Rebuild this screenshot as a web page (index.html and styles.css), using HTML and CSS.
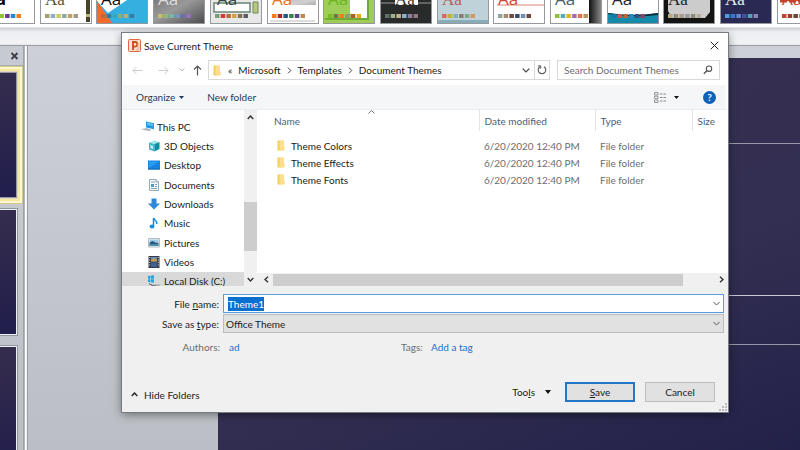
FILE: index.html
```html
<!DOCTYPE html>
<html lang="en">
<head>
<meta charset="utf-8">
<meta name="viewport" content="width=device-width, initial-scale=1">
<title>Save Current Theme</title>
<link rel="stylesheet" href="styles.css">
</head>
<body>
<div class="app">
  <header class="ribbon">
    <div class="gallery" id="gallery"></div>
  </header>
  <div class="workspace">
    <aside class="slides">
      <div class="slides-head"><button class="slides-close" aria-label="Close pane"><svg width="9" height="8" viewBox="0 0 9 8"><path d="M1.5 1l6 6M7.5 1l-6 6" stroke="#3a3d42" stroke-width="1.8"/></svg></button></div>
      <div class="thumb selected"></div>
      <div class="thumb"></div>
      <div class="thumb"></div>
    </aside>
    <div class="divider"></div>
    <main class="canvas"><div class="slide"><i class="guide first"></i><i class="guide second"></i><i class="guide third"></i></div></main>
  </div>
</div>

<section class="dialog" role="dialog" aria-labelledby="dialog-title">
  <div class="titlebar">
    <svg width="13" height="13" viewBox="0 0 13 13"><rect x=".5" y=".5" width="12" height="12" rx="1" fill="#fbd9c8" stroke="#dd6a45"/><path d="M2 2h9v9H2z" fill="#f6e6dc"/><path d="M5 11V3h2a2.2 2.2 0 0 1 0 4.600H5" fill="none" stroke="#d04a1d" stroke-width="1.900"/><path d="M10 4v7H8" fill="none" stroke="#efa283"/></svg>
    <h1 id="dialog-title">Save Current Theme</h1>
    <button class="close" aria-label="Close"><svg width="9" height="9" viewBox="0 0 9 9"><path d="M.7.7l7.600 7.600M8.300.7L.7 8.300" stroke="#222" stroke-width="1"/></svg></button>
  </div>

  <div class="navbar">
    <div class="arrows">
      <button aria-label="Back"><svg width="11" height="9" viewBox="0 0 11 9"><path d="M10.500 4.500H1M4.500 1L1 4.500 4.500 8" fill="none" stroke="#ccc"/></svg></button>
      <button aria-label="Forward"><svg width="11" height="9" viewBox="0 0 11 9"><path d="M.5 4.500H10M6.500 1L10 4.500 6.500 8" fill="none" stroke="#ccc"/></svg></button>
      <button aria-label="Recent locations"><svg width="6" height="4" viewBox="0 0 6 4"><path d="M.5.5L3 3 5.500.5" fill="none" stroke="#bbb"/></svg></button>
      <button aria-label="Up"><svg width="9" height="11" viewBox="0 0 9 11"><path d="M4.500 10.500V1M1 4.500L4.500 1 8 4.500" fill="none" stroke="#555" stroke-width="1.200"/></svg></button>
    </div>
    <div class="address">
      <svg class="folder" width="8" height="11" viewBox="0 0 8 11"><path d="M.5.5h4v10h-4z" fill="#f2cd64"/><path d="M2.500.500h4.500v6l.7.5v3.500H2.500z" fill="#fbdf8c"/></svg>
      <span class="laquo">«</span>
      <a href="#microsoft">Microsoft</a><svg class="crumb" width="5" height="7" viewBox="0 0 5 7"><path d="M1 .7l2.800 2.800L1 6.300" fill="none" stroke="#444"/></svg>
      <a href="#templates">Templates</a><svg class="crumb" width="5" height="7" viewBox="0 0 5 7"><path d="M1 .7l2.800 2.800L1 6.300" fill="none" stroke="#444"/></svg>
      <a href="#themes">Document Themes</a>
      <button class="history" aria-label="Previous locations"><svg width="8" height="5" viewBox="0 0 8 5"><path d="M.7.7L4 4 7.300.7" fill="none" stroke="#444" stroke-width="1.200"/></svg></button>
      <button class="refresh" aria-label="Refresh"><svg width="10" height="10" viewBox="0 0 10 10"><path d="M3 1.700A3.800 3.800 0 1 0 7 1.700" fill="none" stroke="#555" stroke-width="1.100"/><path d="M.9.9h2.800v2.800" fill="none" stroke="#555"/></svg></button>
    </div>
    <div class="search">
      <input type="search" aria-label="Search Document Themes" placeholder="Search Document Themes">
      <svg width="10" height="10" viewBox="0 0 10 10"><circle cx="6" cy="3.700" r="2.700" fill="none" stroke="#555" stroke-width="1.100"/><path d="M4 5.700L.8 8.800" stroke="#555" stroke-width="1.400"/></svg>
    </div>
  </div>

  <div class="toolbar">
    <button>Organize <svg width="5" height="3" viewBox="0 0 5 3"><path d="M0 0h5L2.500 3z" fill="#1e3a5c"/></svg></button>
    <button>New folder</button>
    <button class="view" aria-label="Change view"><svg width="12" height="11" viewBox="0 0 12 11"><path d="M.5.500h3.500v2.500H.5zM.5 4.200h3.500v2.500H.5zM.5 8h3.500v2.500H.5z" fill="#eee" stroke="#999"/><path d="M6 2h2.500M9.500 2H12M6 5.500h2.500M9.500 5.500H12M6 9h2.500M9.500 9H12" stroke="#888"/></svg></button>
    <button class="view-menu" aria-label="More view options"><svg width="5" height="3" viewBox="0 0 5 3"><path d="M0 0h5L2.500 3z" fill="#111"/></svg></button>
    <button class="help" aria-label="Help">?</button>
  </div>

  <div class="browser">
    <ul class="tree">
      <li class="root"><svg width="13" height="11" viewBox="0 0 13 11"><path d="M4 .5l8 1.700v6L4 6.500z" fill="#2795df"/><path d="M5 1.600l6 1.400v2L5 4z" fill="#64c2f4"/><path d="M4 7l5 1.500-1 1.500L1 9z" fill="#a9b2ba"/><path d="M0 8.500l4-1" stroke="#b8c0c6"/></svg>This PC</li>
      <li><svg width="12" height="12" viewBox="0 0 12 12"><path d="M1 2.500L6 .5l5.500 1.500-5 2z" fill="#9fe8ec"/><path d="M1 2.500l5.500 1.500v7.500L1 9.500z" fill="#35bfcd"/><path d="M6.500 4l5-2v7l-5 2.500z" fill="#128ca3"/><path d="M2.500 5L5 6v3L2.500 8z" fill="#c6f4f4"/></svg>3D Objects</li>
      <li><svg width="12" height="12" viewBox="0 0 12 12"><path d="M0 1.500h12v9H0z" fill="#1684df"/><path d="M1 2.500h10L1 9z" fill="#299cf0"/><path d="M0 9.500h12v1H0z" fill="#1069b4"/></svg>Desktop</li>
      <li><svg width="12" height="12" viewBox="0 0 12 12"><path d="M1.500.5h6.500l2.500 2.500v8.500h-9z" fill="#f5f9fc" stroke="#97aab8"/><path d="M8 .5V3h2.500" fill="none" stroke="#97aab8"/><path d="M3 5h3v3H3z" fill="#4e9cc8"/><path d="M3 3h4M7 5.500h2M7 7.500h2M3 9.500h6" stroke="#78a6c4"/></svg>Documents</li>
      <li><svg width="12" height="12" viewBox="0 0 12 12"><path d="M3.500.5h5v5H12l-6 6-6-6h3.500z" fill="#2e88d9"/></svg>Downloads</li>
      <li><svg width="12" height="12" viewBox="0 0 12 12"><path d="M5.500 9V1c.5 2.200 4 2.500 3.200 6" fill="none" stroke="#168de2" stroke-width="1.500"/><ellipse cx="4" cy="9.500" rx="2.400" ry="1.900" fill="#168de2"/></svg>Music</li>
      <li><svg width="12" height="12" viewBox="0 0 12 12"><path d="M.5 1.500h11v8.500H.5z" fill="#f4f7f8" stroke="#b5bcc1"/><path d="M1.500 2.500h9V5h-9z" fill="#9ccce8"/><path d="M1.500 5.500l3-1.500 3 1.500h3v3h-9z" fill="#28597f"/><path d="M1.500 7h9v2h-9z" fill="#4a8da9"/></svg>Pictures</li>
      <li><svg width="12" height="12" viewBox="0 0 12 12"><path d="M.5 0h11v12H.5z" fill="#3b3b43"/><path d="M3 1h6v4.500H3z" fill="#638ebf"/><path d="M3 6.500h6V11H3z" fill="#3f6199"/><path d="M3 4l3-2 3 2v1.500H3z" fill="#be9c4d"/><path d="M1.700 1v10M10.300 1v10" stroke="#ddd" stroke-dasharray="1 1.500"/></svg>Videos</li>
      <li class="current"><svg width="12" height="12" viewBox="0 0 12 12"><path d="M0 1l2.500-.3v3H0zM3 .7L6 .3v3.400H3zM0 4.200h2.500v3L0 7zM3 4.200h3v3.600l-3-.4z" fill="#22a8df"/><path d="M1 8.500l4 2.500h7V9.500L8 9l-3 .5z" fill="#adb3b5"/><path d="M1 8.500l4 2.500h3" fill="none" stroke="#51585c"/></svg>Local Disk (C:)</li>
    </ul>
    <div class="vscroll">
      <svg width="7" height="5" viewBox="0 0 7 5"><path d="M.7 4l2.800-3 2.800 3" fill="none" stroke="#333" stroke-width="1.400"/></svg>
      <span class="vthumb"></span>
      <svg width="7" height="5" viewBox="0 0 7 5"><path d="M.7 1l2.800 3 2.800-3" fill="none" stroke="#333" stroke-width="1.400"/></svg>
    </div>
    <div class="files">
      <table>
        <colgroup><col class="c-name"><col class="c-date"><col class="c-type"><col></colgroup>
        <thead><tr><th class="sorted">Name<svg width="7" height="4" viewBox="0 0 7 4"><path d="M.5 3.500l3-3 3 3" fill="none" stroke="#777"/></svg></th><th>Date modified</th><th>Type</th><th>Size</th></tr></thead>
        <tbody>
          <tr><td><svg class="folder" width="8" height="11" viewBox="0 0 8 11"><path d="M.5.5h4v10h-4z" fill="#f2cd64"/><path d="M2.500.500h4.500v6l.7.5v3.500H2.500z" fill="#fbdf8c"/></svg>Theme Colors</td><td>6/20/2020 12:40 PM</td><td>File folder</td><td></td></tr>
          <tr><td><svg class="folder" width="8" height="11" viewBox="0 0 8 11"><path d="M.5.5h4v10h-4z" fill="#f2cd64"/><path d="M2.500.500h4.500v6l.7.5v3.500H2.500z" fill="#fbdf8c"/></svg>Theme Effects</td><td>6/20/2020 12:40 PM</td><td>File folder</td><td></td></tr>
          <tr><td><svg class="folder" width="8" height="11" viewBox="0 0 8 11"><path d="M.5.5h4v10h-4z" fill="#f2cd64"/><path d="M2.500.500h4.500v6l.7.5v3.500H2.500z" fill="#fbdf8c"/></svg>Theme Fonts</td><td>6/20/2020 12:40 PM</td><td>File folder</td><td></td></tr>
        </tbody>
      </table>
      <div class="hscroll">
        <svg width="5" height="7" viewBox="0 0 5 7"><path d="M4 .7L1 3.500l3 2.800" fill="none" stroke="#333" stroke-width="1.400"/></svg>
        <span class="hthumb"></span>
        <svg width="5" height="7" viewBox="0 0 5 7"><path d="M1 .7l3 2.800-3 2.800" fill="none" stroke="#333" stroke-width="1.400"/></svg>
      </div>
    </div>
  </div>

  <form class="form">
    <div class="field">
      <label for="file-name">File <u>n</u>ame:</label>
      <div class="combo"><input id="file-name" type="text" value="Theme1"><svg width="7" height="5" viewBox="0 0 7 5"><path d="M.5 1l3 3 3-3" fill="none" stroke="#555"/></svg></div>
    </div>
    <div class="field">
      <label for="file-type">Save as <u>t</u>ype:</label>
      <div class="combo type"><select id="file-type"><option>Office Theme</option></select><svg width="7" height="5" viewBox="0 0 7 5"><path d="M.5 1l3 3 3-3" fill="none" stroke="#555"/></svg></div>
    </div>
    <div class="meta">
      <span class="authors">Authors:</span><a class="author" href="#author">ad</a>
      <span class="tags">Tags:</span><a href="#tag">Add a tag</a>
    </div>
    <div class="actions">
      <button type="button" class="hide"><svg width="7" height="5" viewBox="0 0 7 5"><path d="M.7 4l2.800-3 2.800 3" fill="none" stroke="#222" stroke-width="1.400"/></svg>Hide Folders</button>
      <button type="button" class="tools"><span>Too<u>l</u>s</span><svg width="6" height="4" viewBox="0 0 6 4"><path d="M0 0h6L3 4z" fill="#111"/></svg></button>
      <button type="button" class="push primary"><u>S</u>ave</button>
      <button type="button" class="push">Cancel</button>
    </div>
  </form>
  <svg class="grip" width="8" height="8" viewBox="0 0 8 8"><path d="M6 0h2v2H6zM3 3h2v2H3zM6 3h2v2H6zM0 6h2v2H0zM3 6h2v2H3zM6 6h2v2H6z" fill="#bbb"/></svg>
</section>
<script src="script.js"></script>
</body>
</html>
```
FILE: styles.css
```css
* { box-sizing: border-box; }
body { margin: 0; font: 10px/14px Lato, "Open Sans", sans-serif; color: #1b1b1b; }
button, input, select { font: inherit; color: inherit; margin: 0; padding: 0; border: 0; background: none; border-radius: 0; outline: 0; }
a { color: inherit; text-decoration: none; }
svg { flex: none; display: block; }
ul { list-style: none; margin: 0; padding: 0; }

.app { min-height: 100vh; display: flex; flex-direction: column; overflow: hidden; }
.ribbon { height: 46px; background: linear-gradient(#fff 27px, #c9ccd0 28px, #dfe1e5 30px, #eceef2 32px, #f2f3f6 43px, #e4e6ea); border-bottom: 1px solid #9a9ea4; overflow: hidden; }
.gallery { display: flex; justify-content: space-between; margin: 0 -29px 0 -17px; }
.gallery svg { width: 52px; height: 24px; }
.workspace { flex: 1; display: flex; background: linear-gradient(#cdd0d6, #bbbfc5); }
.slides { width: 24px; border-right: 1px solid #9da1a8; height: 404px; overflow: hidden; }
.slides-head { height: 20px; border-bottom: 1px solid #a7acb3; background: #c6cad1; display: flex; justify-content: flex-end; align-items: center; padding-right: 4px; }
.thumb { height: 126px; width: 17px; margin-bottom: 11px; background: linear-gradient(175deg, #352d4d, #211e4d); border: 1px solid #edeff2; border-left: 0; box-shadow: 0 0 0 1px #92969e; }
.thumb.selected { height: 126px; margin: 6px 0 11px; border-color: #9799a4; box-shadow: 0 0 0 1px #ddd9c5, 0 0 0 3px #f8e6a1, 0 0 0 5px #fff8cc, 0 0 0 6px #d5c98c; }
.divider { width: 4px; background: linear-gradient(90deg, #b0b4bb 1px, #fff 1px 2px, #edeff2 2px 3px, #9ca1a8 3px); }
.canvas { flex: 1; padding: 12px 0 0 190px; display: flex; }
.slide { flex: 1; background: linear-gradient(160deg, #37304f, #332f52 60%, #222149); display: grid; grid-template-rows: 86px 152px 49px 1fr; }
.guide { align-self: end; height: 1px; background: #9998aa; }
.guide.second { background: #c8c7d2; }

.dialog { position: absolute; top: 33px; left: 122px; right: 72px; background: #fff; outline: 1px solid #777b82; box-shadow: 0 2px 9px rgba(0, 0, 0, .5); }
.titlebar { display: flex; align-items: center; height: 25px; padding: 0 9px 0 6px; gap: 3px; }
h1 { flex: 1; margin: 0; font-size: 10px; font-weight: 400; }
.navbar { display: flex; align-items: center; gap: 7px; padding: 2px 8px 5px 10px; }
.arrows { display: flex; align-items: center; gap: 10px; }
.arrows button:nth-child(2) { margin-left: 5px; }
.arrows button:nth-child(3) { margin-right: -2px; }
.address { flex: 1; display: flex; align-items: center; height: 20px; border: 1px solid #d9d9d9; padding-left: 4px; margin-left: -1px; }
.laquo { margin: 0 6px 0 7px; }
.crumb { margin: 0 6px; }
.history { margin-left: auto; padding: 0 4px; }
.refresh { height: 18px; border-left: 1px solid #d9d9d9; padding: 0 2px; }
.search { width: 163px; height: 20px; border: 1px solid #d9d9d9; display: flex; align-items: center; padding: 0 6px; }
.search input { flex: 1; min-width: 0; appearance: none; }
.search input::placeholder { color: #6d6d6d; opacity: 1; }
.toolbar { display: flex; align-items: center; height: 25px; padding: 0 10px 0 14px; margin-right: 2px; background: #f5f6f7; color: #1e3a5c; border-bottom: 1px solid #e8ebf0; }
.toolbar button { display: flex; align-items: center; gap: 4px; margin-right: 23px; }
.toolbar .view { margin: 0 8px 0 auto; }
.toolbar .view-menu { margin-right: 24px; }
.toolbar .help { width: 13px; height: 13px; margin: 0; border-radius: 50%; background: #0b62b8; color: #fff; justify-content: center; font-weight: 700; }

.browser { display: flex; height: 176px; }
.tree { width: 122px; padding-top: 7px; overflow: hidden; display: grid; grid-template-rows: repeat(9, 1fr); height: 181px; }
.browser > .tree { clip-path: inset(0 0 5px 0); }
.tree li { display: flex; align-items: center; gap: 4px; padding-left: 26px; }
.tree .root { padding-left: 20px; gap: 2px; }
.tree .current { background: #d9d9d9; }
.vscroll { width: 13px; background: #f0f0f0; display: flex; flex-direction: column; align-items: center; padding: 5px 0 4px; }
.vthumb { width: 13px; height: 49px; background: #cdcdcd; margin: auto 0 26px; }
.files { flex: 1; display: flex; flex-direction: column; justify-content: space-between; }
table { width: 100%; table-layout: fixed; border-collapse: collapse; }
.c-name { width: 222px; } .c-date { width: 116px; } .c-type { width: 97px; }
th { height: 21px; padding: 0 0 0 5px; font-weight: 400; text-align: left; color: #4c607a; border-right: 1px solid #e5e5e5; }
th:last-child { border: 0; }
th.sorted { padding-left: 17px; position: relative; }
th.sorted svg { position: absolute; top: 0; left: 50%; }
td { height: 17px; padding: 0 0 0 5px; color: #6d6d6d; }
td:first-child { display: flex; align-items: center; gap: 6px; padding-left: 20px; color: #1b1b1b; }
tbody::before { content: ""; display: block; height: 6px; }
.hscroll { height: 13px; background: #f0f0f0; display: flex; align-items: center; padding: 0 4px 0 7px; }
.hthumb { width: 410px; height: 12px; background: #cdcdcd; margin: 0 auto 0 4px; }

.form { background: #f0f0f0; padding: 8px 4px 10px 0; }
.field { display: flex; align-items: center; margin-bottom: 1px; }
.field label { width: 101px; text-align: right; padding-right: 4px; }
.combo { flex: 1; display: flex; align-items: center; height: 19px; padding: 0 3px 0 4px; background: #fff; border: 1px solid #569de5; }
.combo input { flex: 1; min-width: 0; height: 14px; }
.combo input::selection { background: #0b6fd0; color: #fff; }
.combo.type { background: #e1e1e1; border-color: #bdbdbd; padding-left: 2px; }
.combo select { flex: 1; appearance: none; }
.meta { display: flex; margin-top: 7px; color: #6d6d6d; }
.meta a { color: #1b6fcb; }
.authors { width: 101px; text-align: right; padding-right: 3px; }
.author { width: 171px; padding-left: 6px; }
.tags { width: 37px; padding-left: 7px; }
.actions { display: flex; align-items: center; margin-top: 28px; padding: 0 9px; }
.hide { display: flex; align-items: center; gap: 6px; margin-right: auto; padding-top: 5px; }
.tools { display: flex; align-items: center; gap: 10px; margin-right: 14px; }
.push { width: 70px; height: 20px; background: #e1e1e1; border: 1px solid #bcbcbc; }
.push.primary { border: 2px solid #2476c8; margin-right: 10px; }
.grip { position: absolute; right: 1px; bottom: 1px; }
```
FILE: script.js
```js
const themes = [
  { bg: '#fff', ink: '#000', bold: true, x: 1, sw: ['#f15a24', '#75b62c', '#8cc22e', '#68388f', '#168dd0', '#ef7f22'] },
  { bg: '#fff', ink: '#555441', serif: true, art: '<path d="M46 0h4v22h-4z" fill="#49432c"/><path d="M46 14h4v3h-4z" fill="#b9b583"/>', sw: ['#a69d75', '#8fafc0', '#c8ce62', '#90a9a0', '#c19f64', '#a59889'] },
  { bg: '#35afe0', ink: '#111', art: '<path d="M1 0h30L12 13 1 1z" fill="#fff"/><path d="M1 1l15 22H1z" fill="#f26a2c"/>', sw: ['#bf6847', '#397b9a', '#38a7b8', '#8bae79', '#b8ad76', '#397aa1'] },
  { bg: 'url(#metal)', ink: '#ddd', sw: ['#c4bd68', '#92b778', '#73b8a8', '#7796bd', '#716cb0', '#9573b9'] },
  { bg: '#e7e8e7', ink: '#344940', x: 7, art: '<path d="M4 3h36v9H4z" fill="#fff" stroke="#688575" stroke-width="1.500"/><path d="M43 2h5v11h-5z" fill="#b8c77c" stroke="#738461"/>', sw: ['#7b9b7b', '#c84032', '#b56b37', '#d1a24a', '#807154', '#5d5b67'] },
  { bg: '#fff', ink: '#ed7426', art: '<path d="M22 0h27v5H22z" fill="url(#metal)" opacity=".45"/><path d="M3 21h45" stroke="#bbb"/>', sw: ['#ef7c20', '#a5282b', '#25577e', '#37854b', '#574285', '#bd8b4d'] },
  { bg: '#9ece57', ink: '#68b51c', art: '<path d="M27 0h18v18H32l-5-5z" fill="#fff"/><path d="M45 0v19H2" fill="none" stroke="#70a934" stroke-width="2"/>', sw: ['#79bd22', '#6b794d', '#f37a16', '#8a9973', '#a6622b', '#e8aa1a'] },
  { bg: '#292a2a', ink: '#fff', serif: true, art: '<path d="M15 0h23v5H15z" fill="#fff"/><path d="M1 3h14M38 3h13" stroke="#999"/>', x: 15, dark: true, sw: ['#617069', '#a2b18b', '#bdb68e', '#91b4cb', '#8a7f9c', '#947884'] },
  { bg: '#bfd1d9', ink: '#b65d58', serif: true, art: '<path d="M1 20h50v3H1z" fill="#87adb8"/>', sw: ['#d66b59', '#c2b536', '#7eb1b4', '#8b7c75', '#80a889', '#d19a64'] },
  { bg: '#fff', ink: '#d24738', art: '<path d="M4 5h47" stroke="#d98477"/>', sw: ['#93a29d', '#a38b70', '#6d4844', '#354c6b', '#708fae', '#71443f'] },
  { bg: '#fff', ink: '#48616a', art: '<path d="M39 0h12v23H39z" fill="url(#shade)"/>', sw: ['#91bf3d', '#55aab7', '#d7b61f', '#aa68ac', '#dc7546', '#b39661'] },
  { bg: '#fff', ink: '#282828', art: '<path d="M1 13q25 4 50 0v10H1z" fill="#168aa9"/><path d="M1 13q25 4 50 0v2q-25 3-50-1z" fill="#062e3d"/>', sw: ['#167aa0', '#ce5653', '#bd6338', '#2987ba', '#344d81', '#854564'] },
  { bg: '#141414', ink: '#222', serif: true, art: '<path d="M5 0h42v12l-5 6H9l-4-7z" fill="#ccc"/>', sw: ['#b7aa83', '#8e8d7a', '#a69b8e', '#989b9a', '#8f8a84', '#b5ada0'] },
  { bg: '#292953', ink: '#eee', serif: true, sw: ['#4b9ddb', '#3d77cd', '#6486cf', '#4853a0', '#4fa5ad', '#8f82b8'] },
  { bg: '#fff', ink: '#c5432a', art: '<path d="M3 1h49" stroke="#c5432a" stroke-width="3" stroke-dasharray="7 2"/>', sw: ['#c5432a', '#963f2b', '#6b4639', '#a38c62', '#bd7341', '#777'] }
];
const defs = '<defs><linearGradient id="metal" x2="1" y2="1"><stop stop-color="#777"/><stop offset=".45" stop-color="#999"/><stop offset="1" stop-color="#4b4a4d"/></linearGradient><linearGradient id="shade" x2="1"><stop stop-color="#111"/><stop offset="1" stop-color="#888"/></linearGradient></defs>';
document.getElementById('gallery').innerHTML = themes.map((t, i) =>
  `<svg viewBox="0 0 52 24" role="img" aria-label="Theme ${i + 1}">${defs}<rect x=".5" y="-4" width="51" height="27.500" fill="${t.bg}" stroke="#96999d"/>${t.art || ''}` +
  `<text x="${t.x || 5}" y="5" font-size="17" font-weight="${t.bold ? 700 : 400}" font-family="${t.serif ? 'Liberation Serif' : 'Open Sans'}" fill="${t.dark ? '#333' : t.ink}">Aa</text>` +
  t.sw.map((c, n) => `<rect x="${5 + n * 5.7}" y="14" width="4.500" height="4" fill="${c}"/>`).join('') + '</svg>').join('');
const fileName = document.getElementById('file-name');
fileName.focus();
fileName.select();
```
